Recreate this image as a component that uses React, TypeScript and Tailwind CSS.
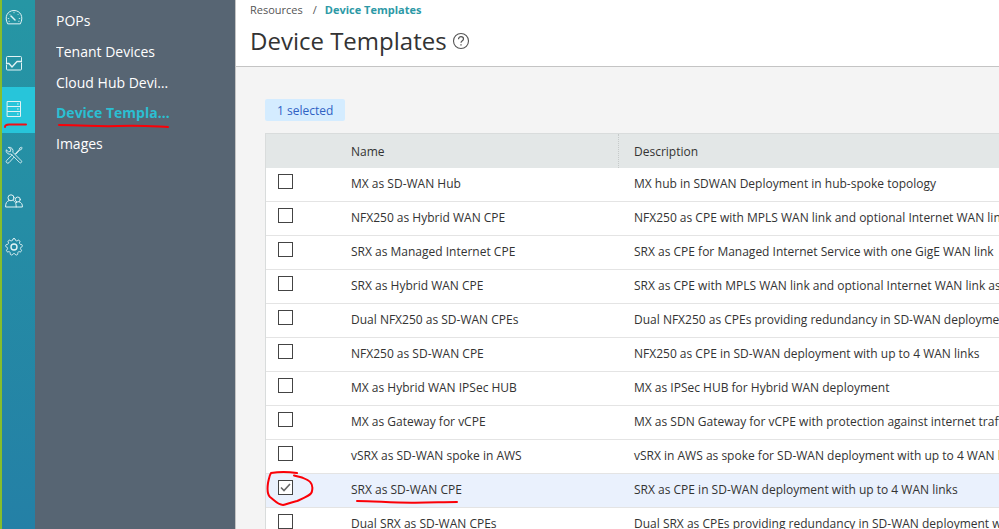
import { useState, type ReactNode } from "react";

const templates: { name: string; description: string }[] = [
  { name: "MX as SD-WAN Hub", description: "MX hub in SDWAN Deployment in hub-spoke topology" },
  { name: "NFX250 as Hybrid WAN CPE", description: "NFX250 as CPE with MPLS WAN link and optional Internet WAN link" },
  { name: "SRX as Managed Internet CPE", description: "SRX as CPE for Managed Internet Service with one GigE WAN link" },
  { name: "SRX as Hybrid WAN CPE", description: "SRX as CPE with MPLS WAN link and optional Internet WAN link as" },
  { name: "Dual NFX250 as SD-WAN CPEs", description: "Dual NFX250 as CPEs providing redundancy in SD-WAN deployment" },
  { name: "NFX250 as SD-WAN CPE", description: "NFX250 as CPE in SD-WAN deployment with up to 4 WAN links" },
  { name: "MX as Hybrid WAN IPSec HUB", description: "MX as IPSec HUB for Hybrid WAN deployment" },
  { name: "MX as Gateway for vCPE", description: "MX as SDN Gateway for vCPE with protection against internet traffic" },
  { name: "vSRX as SD-WAN spoke in AWS", description: "vSRX in AWS as spoke for SD-WAN deployment with up to 4 WAN links" },
  { name: "SRX as SD-WAN CPE", description: "SRX as CPE in SD-WAN deployment with up to 4 WAN links" },
  { name: "Dual SRX as SD-WAN CPEs", description: "Dual SRX as CPEs providing redundancy in SD-WAN deployment with" },
];

const menu = ["POPs", "Tenant Devices", "Cloud Hub Devices", "Device Templates", "Images"];

function Icon({ children }: { children: ReactNode }) {
  return (
    <svg
      viewBox="0 0 18 18"
      className="size-[18px]"
      fill="none"
      stroke="#e2f3f5"
      strokeWidth="1"
      strokeLinecap="round"
      strokeLinejoin="round"
      aria-hidden="true"
    >
      {children}
    </svg>
  );
}

const gearPath = (() => {
  const points: string[] = [];
  for (let i = 0; i <= 96; i++) {
    const a = (i / 96) * Math.PI * 2;
    const r = 7.5 + 0.9 * Math.tanh(2.2 * Math.cos(a * 9));
    points.push(`${(9 + r * Math.sin(a)).toFixed(2)} ${(9 - r * Math.cos(a)).toFixed(2)}`);
  }
  return `M${points.join("L")}Z`;
})();

const rail: { label: string; icon: ReactNode }[] = [
  {
    label: "Dashboard",
    icon: (
      <Icon>
        <path d="M2.5 15.5C-1 9 2.5 2.5 9 2.5S19 9 15.5 15.5Z" />
        <path d="M6 8l4 4" strokeWidth="1.5" />
        <path d="M9 4.2v.6M4.7 6.300l.3.3M13.3 6.3l-.3.3M3.2 10.5h.6M14.2 10.5h.6M3.9 13.3h.5M13.6 13.3h.5" strokeWidth=".8" />
      </Icon>
    ),
  },
  {
    label: "Monitor",
    icon: (
      <Icon>
        <path d="M1.500 9V3.500a1 1 0 0 1 1-1h13a1 1 0 0 1 1 1V7M16.500 9v6a1 1 0 0 1-1 1h-13a1 1 0 0 1-1-1v-4" />
        <path d="M1.500 9.500H4l3 3.500 5-5.500h4.500" strokeWidth="1.3" />
      </Icon>
    ),
  },
  {
    label: "Resources",
    icon: (
      <Icon>
        <path d="M2.500 1.500h13v15h-13ZM2.500 6.500h13M2.500 11.500h13" />
        <path d="M12.500 4h.7M12.500 9h.7M12.500 14h.7" />
      </Icon>
    ),
  },
  {
    label: "Configuration",
    icon: (
      <Icon>
        <path
          d="M3.600 1.300a3.700 3.700 0 0 1 4.200 4.900l8.500 8.600a1.200 1.200 0 0 1-1.700 1.700L6.100 8A3.700 3.700 0 0 1 1.200 3.800l2.300 2 2-.4.300-2Z"
          strokeWidth=".9"
        />
        <path
          d="M10.400 7.600l3.800-4 .6-1.600 1.700-.8.600.6-.8 1.700-1.600.6-3.700 4M7 9.200L1.700 14.400a1.600 1.600 0 0 0 2.300 2.300l4.900-5.400"
          strokeWidth=".9"
        />
      </Icon>
    ),
  },
  {
    label: "Tenants",
    icon: (
      <Icon>
        <circle cx="6" cy="5.800" r="3" />
        <circle cx="12.800" cy="7.500" r="2.500" />
        <path d="M4 8.500C1.500 9.500.6 11 .6 15h16.800c0-3-.7-4.200-2.900-5M8.200 8.500c2 .9 2.900 2.200 3 6.500M11.200 10.800l.6-.7" />
      </Icon>
    ),
  },
  {
    label: "Administration",
    icon: (
      <Icon>
        <path d={gearPath} />
        <circle cx="9" cy="9" r="3" strokeWidth="1.400" />
      </Icon>
    ),
  },
];

function Rail() {
  return (
    <nav
      aria-label="Main"
      className="w-[35px] shrink-0 overflow-hidden border-l-2 border-[#86bd2c] bg-linear-to-b from-[#2696a4] to-[#2480a6]"
    >
      <div className="-mt-[5px]">
        {rail.map(({ label, icon }) => {
          const active = label === "Resources";
          return (
            <a
              key={label}
              href="#"
              aria-label={label}
              className={`relative flex h-[46px] items-center pb-0.5 pl-[3px] ${active ? "bg-[#27c5da]" : ""}`}
            >
              {icon}
              {active && (
                <svg className="absolute bottom-1 left-0.5 h-2 w-6" viewBox="0 0 24 8" fill="none" aria-hidden="true">
                  <path d="M1 6Q1 3.500 5 3.500H22" stroke="#f20d14" strokeWidth="2" strokeLinecap="round" />
                </svg>
              )}
            </a>
          );
        })}
      </div>
    </nav>
  );
}

function SideMenu() {
  return (
    <nav aria-label="Resources" className="w-[200px] shrink-0 bg-[#576573] pt-[5px] pl-[21px]">
      {menu.map((item) => {
        const active = item === "Device Templates";
        return (
          <a
            key={item}
            href="#"
            className={`relative block w-[116px] text-sm ${
              active ? "h-[30px] leading-[30px] font-bold text-[#2bbfd2]" : "h-[31px] leading-[31px] text-white"
            }`}
          >
            <span className="block truncate">{item}</span>
            {active && (
              <svg className="absolute bottom-0 left-0 h-1.5 w-full" viewBox="0 0 116 6" fill="none" aria-hidden="true">
                <path d="M3 3C30 3 40 4.800 62 4S92 4 112 5" stroke="#fb0007" strokeWidth="2" strokeLinecap="round" />
              </svg>
            )}
          </a>
        );
      })}
    </nav>
  );
}

function PageHeader() {
  return (
    <header className="h-[67px] border-b border-[#c4c4c4] bg-white pl-3.5">
      <div className="flex h-5 items-center text-[11px] text-[#555]">
        <a href="#">Resources</a>
        <span className="pr-2 pl-2.5">/</span>
        <a href="#" className="font-bold text-[#2d99a6]">
          Device Templates
        </a>
      </div>
      <div className="flex h-[41px] items-center gap-[5px]">
        <h1 className="text-2xl text-[#333]">Device Templates</h1>
        <button type="button" aria-label="Help">
          <svg viewBox="0 0 18 18" className="size-[18px]" fill="none" stroke="#555" strokeWidth="1.1" aria-hidden="true">
            <circle cx="9" cy="9" r="7.500" />
            <path d="M6.500 7.200C6.500 5.500 7.500 4.700 9 4.700s2.500.9 2.500 2.200C11.500 8.700 9 8.700 9 10.800" strokeWidth="1.2" />
            <path d="M9 12.200v1.300" strokeWidth="1.3" />
          </svg>
        </button>
      </div>
    </header>
  );
}

export default function App() {
  const [selected, setSelected] = useState<string[]>(["SRX as SD-WAN CPE"]);

  const toggle = (name: string) =>
    setSelected((all) => (all.includes(name) ? all.filter((n) => n !== name) : [...all, name]));

  return (
    <div className="flex h-screen overflow-hidden bg-[#f4f4f4] font-['Open_Sans','Noto_Sans',sans-serif] text-[#333]">
      <Rail />
      <SideMenu />
      <main className="min-w-0 flex-1 border-l border-[#c4c4c4]">
        <PageHeader />
        <div className="flex flex-col items-start gap-3 pt-8 pl-[29px]">
          <div className="h-[22px] rounded-xs bg-[#d4ecff] px-3 text-xs leading-6 text-[#2f62c4]">
            {selected.length} selected
          </div>
          <table className="w-full table-fixed border-separate border-spacing-0 border-t border-l border-[#d9dcdc] bg-white text-xs whitespace-nowrap">
            <colgroup>
              <col className="w-[69px]" />
              <col className="w-[283px]" />
              <col />
            </colgroup>
            <thead>
              <tr className="h-[34px] bg-[#e3e7e7] text-left">
                <td />
                <th scope="col" className="px-4 pt-0.5 font-normal">
                  Name
                </th>
                <th scope="col" className="border-l border-dotted border-[#c6caca] pt-0.5 pl-[15px] font-normal">
                  Description
                </th>
              </tr>
            </thead>
            <tbody>
              {templates.map(({ name, description }) => {
                const checked = selected.includes(name);
                return (
                  <tr key={name} className={`h-[34px] ${checked ? "bg-[#eaf1fd]" : ""}`}>
                    <td className="border-b border-[#e4e4e4] p-0 pt-1.5 pl-3 align-top">
                      <div className="relative size-[15px]">
                        <input
                          type="checkbox"
                          aria-label={name}
                          checked={checked}
                          onChange={() => toggle(name)}
                          className="block size-[15px] appearance-none border border-[#444] bg-white"
                        />
                        {checked && (
                          <svg
                            className="pointer-events-none absolute inset-0 size-[15px]"
                            viewBox="0 0 15 15"
                            fill="none"
                            aria-hidden="true"
                          >
                            <path d="M3 7.500L6 10.500L12 4" stroke="#666" strokeWidth="1.600" />
                          </svg>
                        )}
                        {name === "SRX as SD-WAN CPE" && (
                          <svg
                            className="pointer-events-none absolute -top-2.5 -left-3 h-9 w-12"
                            viewBox="0 0 48 36"
                            fill="none"
                            aria-hidden="true"
                          >
                            <path
                              d="M31 3C24 2 14 1.500 5 3C3 6 3 9 2 13C1 20 2 25 4 27C8 30 12 35 17 35C21 34 26 32 31 31C38 28 46 25 46 21C48 12 42 10 36 7.500L28 5.500"
                              stroke="#fb0007"
                              strokeWidth="2"
                              strokeLinecap="round"
                              strokeLinejoin="round"
                            />
                          </svg>
                        )}
                      </div>
                    </td>
                    <td className="border-b border-[#e4e4e4] px-4 pt-0 pb-0.5">
                      <span className="relative">
                        {name}
                        {name === "SRX as SD-WAN CPE" && (
                          <svg
                            className="pointer-events-none absolute top-full left-1 h-1.5 w-[104px]"
                            viewBox="0 0 104 6"
                            fill="none"
                            aria-hidden="true"
                          >
                            <path d="M2 3C20 3 38 5 60 4.700S90 4 102 4" stroke="#fb0007" strokeWidth="2" strokeLinecap="round" />
                          </svg>
                        )}
                      </span>
                    </td>
                    <td className="overflow-hidden border-b border-[#e4e4e4] pt-0 pb-0.5 pl-4">{description}</td>
                  </tr>
                );
              })}
            </tbody>
          </table>
        </div>
      </main>
    </div>
  );
}
